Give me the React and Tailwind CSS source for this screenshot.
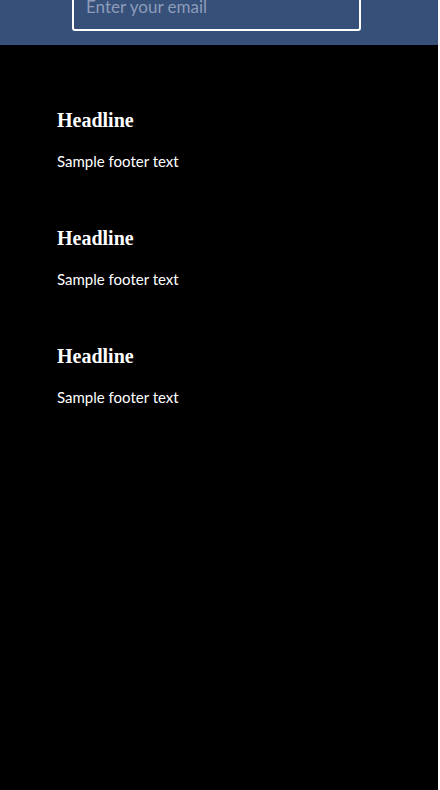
export default function App() {
  const items = [1, 2, 3];

  return (
    <div className="w-[438px] min-h-[790px] bg-black">
      {/* Newsletter strip (scrolled so the input top is cut off) */}
      <div className="h-[45px] bg-[#36507a] overflow-hidden flex justify-center">
        <div className="ml-[-5px] mt-[-20px] w-[289px] h-[51px] rounded-[3px] border-2 border-white flex items-center px-[12px]">
          <input
            type="text"
            placeholder="Enter your email"
            className="w-full bg-transparent outline-none text-white placeholder:text-[#8d9cb8] text-[17px] mt-[2px]"
            style={{ fontFamily: "Lato, 'Open Sans', sans-serif" }}
          />
        </div>
      </div>

      {/* Footer columns */}
      <div className="pl-[57px] pt-[61px] flex flex-col gap-[53px]">
        {items.map((i) => (
          <div key={i} className="flex flex-col">
            <h3
              className="text-white font-bold text-[20px] leading-[28px]"
              style={{ fontFamily: "'Liberation Serif', serif" }}
            >
              Headline
            </h3>
            <p
              className="text-white text-[15px] leading-[20px] mt-[17px]"
              style={{ fontFamily: "Lato, 'Open Sans', sans-serif" }}
            >
              Sample footer text
            </p>
          </div>
        ))}
      </div>
    </div>
  );
}
